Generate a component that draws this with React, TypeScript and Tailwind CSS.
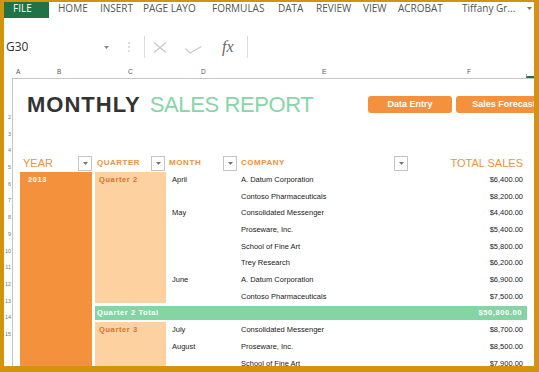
import React from 'react';

type Row = { month?: string; company: string; sales: string };

const tabs: [string, string][] = [
  ['HOME', 'w-[42px]'],
  ['INSERT', 'w-[43px]'],
  ['PAGE LAYO', 'w-[69px]'],
  ['FORMULAS', 'w-[66px]'],
  ['DATA', 'w-[38px]'],
  ['REVIEW', 'w-[47px]'],
  ['VIEW', 'w-[35px]'],
  ['ACROBAT', 'w-[64px]'],
  ['Tiffany Gr...', 'w-[65px]'],
];

const cols: [string, string][] = [
  ['A', 'w-[41px]'],
  ['B', 'w-[71px]'],
  ['C', 'w-[73px]'],
  ['D', 'w-[121px]'],
  ['E', 'w-[145px]'],
  ['F', 'w-[40px]'],
];

const q2: Row[] = [
  { month: 'April', company: 'A. Datum Corporation', sales: '$6,400.00' },
  { company: 'Contoso Pharmaceuticals', sales: '$8,200.00' },
  { month: 'May', company: 'Consolidated Messenger', sales: '$4,400.00' },
  { company: 'Proseware, Inc.', sales: '$5,400.00' },
  { company: 'School of Fine Art', sales: '$5,800.00' },
  { company: 'Trey Research', sales: '$6,200.00' },
  { month: 'June', company: 'A. Datum Corporation', sales: '$6,900.00' },
  { company: 'Contoso Pharmaceuticals', sales: '$7,500.00' },
];

const q3: Row[] = [
  { month: 'July', company: 'Consolidated Messenger', sales: '$8,700.00' },
  { month: 'August', company: 'Proseware, Inc.', sales: '$8,500.00' },
  { company: 'School of Fine Art', sales: '$7,900.00' },
];

const rowNums = [2, 3, 4, 5, 6, 7, 8, 9, 10, 11, 12, 13, 14, 15];

function Filter() {
  return (
    <div className="w-[14px] h-[15px] shrink-0 border border-[#c4c4c4] bg-white flex items-center justify-center">
      <svg width="5" height="3" viewBox="0 0 5 3"><path d="M0 0h5L2.5 3z" fill="#777" /></svg>
    </div>
  );
}

function Group({ label, rows }: { label: string; rows: Row[] }) {
  return (
    <div className="flex">
      <div className="w-[71px] mb-[3px] bg-[#fdd1a0] pl-[4px] pt-[4px] text-[7.5px] leading-none font-bold tracking-[0.6px] text-[#d8712b]">{label}</div>
      <div className="flex-1">
        {rows.map((r, i) => (
          <div key={i} className="h-[16.7px] flex items-start pt-[4px] text-[7.5px] leading-none text-[#1a1a1a]">
            <div className="w-[72px] pl-[6px]">{r.month}</div>
            <div className="w-[171px] pl-[3px]">{r.company}</div>
            <div className="w-[118px] pr-[4px] text-right">{r.sales}</div>
          </div>
        ))}
      </div>
    </div>
  );
}

export default function App() {
  return (
    <div className="w-[539px] h-[372px] bg-[#d4930f] pt-[2px] pl-[4px] pr-[5px] pb-[6px] font-['Liberation_Sans',Arial,sans-serif]">
      <div className="w-full h-full bg-white overflow-hidden flex flex-col">
        {/* ribbon tabs */}
        <div className="h-[16px] flex shrink-0 font-['Open_Sans',sans-serif] text-[10px] leading-none">
          <div className="w-[45px] h-full bg-[#217346] text-white pl-[9px] pt-[1px]">FILE</div>
          <div className="ml-[9px] flex pt-[1px] text-[#555]">
            {tabs.map(([t, w]) => <span key={t} className={`${w} whitespace-nowrap`}>{t}</span>)}
            <svg width="5" height="3" viewBox="0 0 5 3" className="mt-[4px]"><path d="M0 0h5L2.5 3z" fill="#777" /></svg>
          </div>
        </div>

        {/* formula bar */}
        <div className="mt-[17px] h-[24px] flex items-center shrink-0 font-['Open_Sans',sans-serif]">
          <div className="w-[110px] flex items-center">
            <span className="pl-[2px] text-[12px] leading-none text-[#333]">G30</span>
            <svg width="5" height="3" viewBox="0 0 5 3" className="ml-auto mr-[5px]"><path d="M0 0h5L2.5 3z" fill="#888" /></svg>
          </div>
          <svg width="2" height="10" viewBox="0 0 2 10" className="ml-[14px]">
            <rect x="0" y="0" width="2" height="2" fill="#ddd" />
            <rect x="0" y="4" width="2" height="2" fill="#ddd" />
            <rect x="0" y="8" width="2" height="2" fill="#ddd" />
          </svg>
          <div className="ml-[14px] w-px h-[22px] bg-[#dcdcdc]" />
          <svg width="14" height="11" viewBox="0 0 14 11" className="ml-[8px]">
            <path d="M1 0.5L13 10.5M13 0.5L1 10.5" stroke="#c9c9c9" strokeWidth="1.2" fill="none" />
          </svg>
          <svg width="17" height="8" viewBox="0 0 17 8" className="ml-[18px] mt-[5px]">
            <path d="M0.5 2.5L5 7L16.5 0.5" stroke="#c9c9c9" strokeWidth="1.2" fill="none" />
          </svg>
          <span className="ml-[20px] font-['Liberation_Serif',serif] italic text-[16px] leading-none text-[#666]">fx</span>
          <div className="ml-[13px] w-px h-[22px] bg-[#dcdcdc]" />
        </div>

        {/* column headers */}
        <div className="h-[19px] flex items-end shrink-0 text-[6.5px] leading-none text-[#555]">
          <div className="w-[12px]" />
          {cols.map(([c, w]) => <div key={c} className={`${w} pb-[3px]`}>{c}</div>)}
          <div className="ml-auto mr-[-1px] w-[9px] h-[4px] border-l border-[#aaa] border-b-2 border-b-[#217346]" />
        </div>

        {/* sheet */}
        <div className="flex-1 flex min-h-0">
          <div className="w-[8px] shrink-0 flex flex-col items-end pt-[31px] pr-[1px] text-[5.5px] text-[#777]">
            {rowNums.map(n => <div key={n} className="h-[16.7px] leading-[16.7px]">{n}</div>)}
          </div>
          <div className="flex-1 border-l border-t border-[#c6c6c6] flex flex-col min-w-0">
            {/* title row */}
            <div className="mt-[17px] h-[17px] flex items-center shrink-0">
              <div className="w-[355px] shrink-0 pl-[14px] flex items-center whitespace-nowrap">
                <span className="text-[22px] leading-none font-bold tracking-[1px] text-[#333]">MONTHLY</span>
                <span className="ml-[9px] text-[22px] leading-none tracking-[-0.4px] text-[#86d6a6]">SALES REPORT</span>
              </div>
              <div className="w-[84px] h-[17px] shrink-0 rounded-[3px] bg-[#f4913d] text-white text-[9px] font-bold flex items-center justify-center">Data Entry</div>
              <div className="ml-[4px] w-[96px] h-[17px] shrink-0 rounded-[3px] bg-[#f4913d] text-white text-[9px] font-bold flex items-center justify-center whitespace-nowrap">Sales Forecast</div>
            </div>

            {/* header row */}
            <div className="mt-[42px] h-[16px] flex pl-[7px] shrink-0 text-[#f0913c]">
              <div className="w-[72px] flex items-center justify-between">
                <span className="pl-[3px] text-[11px] leading-none">YEAR</span>
                <Filter />
              </div>
              <div className="ml-[3px] w-[71px] flex items-center justify-between pr-[1px]">
                <span className="pl-[2px] text-[8px] leading-none font-bold tracking-[0.5px]">QUARTER</span>
                <Filter />
              </div>
              <div className="w-[72px] flex items-center justify-between pr-[1px]">
                <span className="pl-[3px] text-[8px] leading-none font-bold tracking-[0.6px]">MONTH</span>
                <Filter />
              </div>
              <div className="w-[171px] flex items-center justify-between pr-[1px]">
                <span className="pl-[3px] text-[8px] leading-none font-bold tracking-[0.5px]">COMPANY</span>
                <Filter />
              </div>
              <div className="w-[118px] flex items-center justify-end pr-[4px]">
                <span className="text-[11px] leading-none font-medium">TOTAL SALES</span>
              </div>
            </div>

            {/* data */}
            <div className="mt-[1px] flex-1 flex pl-[7px]">
              <div className="w-[72px] shrink-0 bg-[#f4913d] pl-[8px] pt-[4px] text-[7.5px] leading-none font-bold tracking-[0.6px] text-white">2013</div>
              <div className="ml-[3px] w-[432px] shrink-0">
                <Group label="Quarter 2" rows={q2} />
                <div className="h-[16.7px]">
                  <div className="h-[14px] bg-[#85d4a3] flex items-center justify-between pl-[2px] pr-[5px] text-[7.5px] leading-none font-bold tracking-[0.6px] text-white">
                    <span>Quarter 2 Total</span>
                    <span>$50,800.00</span>
                  </div>
                </div>
                <Group label="Quarter 3" rows={q3} />
              </div>
            </div>
          </div>
        </div>
      </div>
    </div>
  );
}
